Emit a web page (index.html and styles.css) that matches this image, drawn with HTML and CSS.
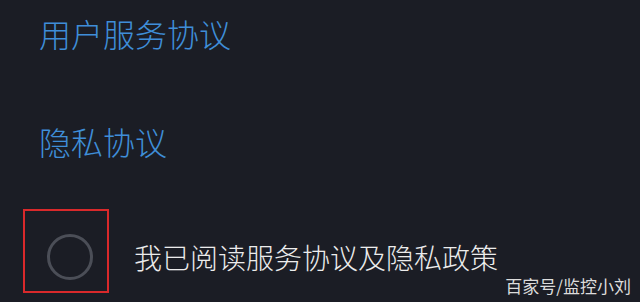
FILE: index.html
```html
<!DOCTYPE html>
<html>
<head>
    <title>协议</title>
    <link rel="stylesheet" href="styles.css">
</head>
<body>
    <div class="page">
        <a class="link first">用户服务协议</a>
        <a class="link second">隐私协议</a>
        <div class="agree">
            <div class="mark">
                <span class="circle"></span>
            </div>
            <span class="agree-text">我已阅读服务协议及隐私政策</span>
        </div>
    </div>
    <div class="watermark">百家号/监控小刘</div>
</body>
</html>
```

FILE: styles.css
```css
html, body {
    margin: 0;
    height: 100%;
}
body {
    background-color: #1b1d25;
    font-family: "Noto Sans CJK SC", "Noto Sans", sans-serif;
    overflow: hidden;
    position: relative;
}
.page {
    display: flex;
    flex-direction: column;
    align-items: flex-start;
    padding: 13px 0 0 0;
}
.link {
    display: block;
    color: #3f8ed8;
    font-size: 32px;
    font-weight: 300;
    line-height: 40px;
    margin-left: 39px;
}
.second {
    margin-top: 68px;
}
.agree {
    display: flex;
    align-items: flex-start;
    margin-top: 48px;
}
.mark {
    margin-left: 23px;
    width: 86px;
    height: 84px;
    box-sizing: border-box;
    border: 2px solid #d9292b;
    padding: 23px 0 0 22px;
}
.circle {
    display: block;
    width: 40px;
    height: 40px;
    border: 3px solid #4b4e57;
    border-radius: 50%;
}
.agree-text {
    margin-left: 25px;
    margin-top: 30px;
    font-size: 28px;
    font-weight: 300;
    line-height: 36px;
    color: #ececec;
}
.watermark {
    position: absolute;
    right: 9px;
    bottom: 6px;
    font-size: 17px;
    line-height: 20px;
    color: #dcdcdc;
}
```
